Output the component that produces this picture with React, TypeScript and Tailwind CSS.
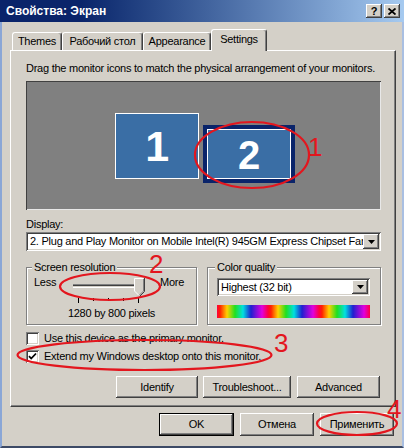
import React from "react";

const raised =
  "bg-[#D4D0C8] shadow-[inset_-1px_-1px_0_#404040,inset_1px_1px_0_#ffffff,inset_-2px_-2px_0_#808080,inset_2px_2px_0_#D4D0C8]";
const sunken =
  "shadow-[inset_1px_1px_0_#808080,inset_-1px_-1px_0_#ffffff,inset_2px_2px_0_#404040,inset_-2px_-2px_0_#D4D0C8]";

function DownArrow() {
  return (
    <svg width="7" height="4" viewBox="0 0 7 4">
      <path d="M0 0h7L3.5 4z" fill="#000" />
    </svg>
  );
}

function Btn({ w, children, def }: { w: string; children: React.ReactNode; def?: boolean }) {
  if (def) {
    return (
      <div className={`${w} h-[23px] border border-black`}>
        <div className={`${raised} w-full h-full flex items-center justify-center`}>{children}</div>
      </div>
    );
  }
  return <div className={`${raised} ${w} h-[23px] flex items-center justify-center`}>{children}</div>;
}

function Tab({ label, w, selected }: { label: string; w: string; selected?: boolean }) {
  if (selected) {
    return (
      <div
        className={`${w} h-[22px] -mb-px relative z-10 bg-[#D4D0C8] border-t border-l border-white border-r border-r-[#404040] rounded-t-[3px] shadow-[inset_-1px_0_0_#808080] flex items-start justify-center pt-[3px]`}
      >
        {label}
      </div>
    );
  }
  return (
    <div
      className={`${w} h-[18px] border-t border-l border-white border-r border-r-[#404040] rounded-t-[3px] shadow-[inset_-1px_0_0_#808080] flex items-start justify-center pt-[2px]`}
    >
      {label}
    </div>
  );
}

export default function App() {
  return (
    <div className="w-[404px] h-[448px] bg-[#D4D0C8] relative overflow-hidden flex flex-col font-['Liberation_Sans',Arial,sans-serif] text-[11px] leading-[13px] tracking-[-0.25px] text-black">
      {/* Title bar */}
      <div className="h-[22px] shrink-0 bg-linear-to-r from-[#0A246A] from-20% to-[#A6CAF0] flex items-center pl-[6px] pr-[4px]">
        <div className="text-white font-bold text-[12px] leading-[14px] tracking-normal flex-1">Свойства: Экран</div>
        <div className="flex gap-[2px]">
          <div className={`${raised} w-[16px] h-[14px] flex items-center justify-center font-bold text-[11px] leading-[11px]`}>
            ?
          </div>
          <div className={`${raised} w-[16px] h-[14px] flex items-center justify-center`}>
            <svg width="8" height="7" viewBox="0 0 8 7">
              <path d="M0.5 0.5L7.5 6.5M7.5 0.5L0.5 6.5" stroke="#000" strokeWidth="1.8" />
            </svg>
          </div>
        </div>
      </div>

      {/* Body */}
      <div className="flex-1 flex flex-col border-l-2 border-l-[#8aa6d6] border-r-2 border-r-[#a9bfe2] border-b-2 border-b-[#3d4a66] pl-[8px] pr-[8px]">
        {/* Tabs */}
        <div className="mt-[7px] h-[21px] flex items-end pl-[2px]">
          <Tab label="Themes" w="w-[50px]" />
          <Tab label="Рабочий стол" w="w-[81px]" />
          <Tab label="Appearance" w="w-[68px]" />
          <Tab label="Settings" w="w-[56px]" selected />
        </div>

        {/* Panel */}
        <div className="w-[386px] border border-t-white border-l-white border-r-[#404040] border-b-[#404040] shadow-[inset_-1px_-1px_0_#808080] pl-[15px] pr-[14px] pt-[11px] pb-[8px] flex flex-col">
          <div className="whitespace-nowrap">Drag the monitor icons to match the physical arrangement of your monitors.</div>

          <div className="mt-[6px] relative w-[355px] h-[129px] bg-[#808080] shadow-[inset_1px_1px_0_#404040,inset_-1px_-1px_0_#e8e8e8]">
            <div className="absolute left-[89px] top-[32px] w-[84px] h-[66px] bg-[#3A6EA5] border border-white flex items-center justify-center text-white font-bold text-[43px] leading-none">
              1
            </div>
            <div className="absolute left-[177px] top-[44px] w-[92px] h-[58px] bg-[#0A246A] p-[4px]">
              <div className="w-full h-full bg-[#3A6EA5] border border-white flex items-center justify-center text-white font-bold text-[40px] leading-none pt-[2px]">
                2
              </div>
            </div>
          </div>

          <div className="mt-[8px]">Display:</div>
          <div className={`mt-[1px] w-[355px] h-[19px] bg-white ${sunken} flex items-center pl-[4px] pr-[2px]`}>
            <div className="flex-1 overflow-hidden whitespace-nowrap">
              2. Plug and Play Monitor on Mobile Intel(R) 945GM Express Chipset Family
            </div>
            <div className={`${raised} w-[16px] h-[15px] shrink-0 flex items-center justify-center`}>
              <DownArrow />
            </div>
          </div>

          <div className="mt-[10px] flex gap-[10px]">
            <fieldset className="w-[171px] border border-[#808080] shadow-[inset_1px_1px_0_#ffffff,1px_1px_0_#ffffff] pb-[4px]">
              <legend className="ml-[5px] px-[2px] bg-[#D4D0C8] relative">Screen resolution</legend>
              <div className="pl-[7px]">
                <div className="mt-[2px] flex items-start">
                  <div className="w-[32px]">Less</div>
                  <svg width="84" height="27" viewBox="0 0 84 27">
                    <rect x="7" y="8" width="70" height="1" fill="#808080" />
                    <rect x="7" y="9" width="70" height="1" fill="#404040" />
                    <rect x="7" y="11" width="71" height="1" fill="#ffffff" />
                    <rect x="77" y="8" width="1" height="4" fill="#ffffff" />
                    <polygon points="68,2 78,2 78,15 73,20 68,15" fill="#D4D0C8" />
                    <polyline points="68.5,15 68.5,2.5 77.5,2.5" fill="none" stroke="#ffffff" strokeWidth="1" />
                    <polyline points="78.5,2 78.5,15.5 73.5,20.5" fill="none" stroke="#404040" strokeWidth="1" />
                    <polyline points="77.5,3 77.5,15 73,19.5" fill="none" stroke="#808080" strokeWidth="1" />
                    <line x1="68.5" y1="15" x2="73" y2="19.5" stroke="#ffffff" strokeWidth="1" />
                    <rect x="12" y="22" width="1" height="5" fill="#000" />
                    <rect x="27" y="22" width="1" height="3" fill="#000" />
                    <rect x="42" y="22" width="1" height="3" fill="#000" />
                    <rect x="57" y="22" width="1" height="3" fill="#000" />
                    <rect x="72" y="22" width="1" height="5" fill="#000" />
                  </svg>
                  <div className="ml-[10px]">More</div>
                </div>
                <div className="mt-[4px] text-center pr-[7px]">1280 by 800 pixels</div>
              </div>
            </fieldset>

            <fieldset className="w-[174px] border border-[#808080] shadow-[inset_1px_1px_0_#ffffff,1px_1px_0_#ffffff] pb-[6px]">
              <legend className="ml-[7px] px-[2px] bg-[#D4D0C8] relative">Color quality</legend>
              <div className="pl-[9px]">
                <div className={`mt-[4px] w-[153px] h-[18px] bg-white ${sunken} flex items-center pl-[4px] pr-[2px]`}>
                  <div className="flex-1 overflow-hidden whitespace-nowrap">Highest (32 bit)</div>
                  <div className={`${raised} w-[16px] h-[14px] shrink-0 flex items-center justify-center`}>
                    <DownArrow />
                  </div>
                </div>
                <div className="mt-[9px] w-[153px] h-[13px] bg-[repeating-linear-gradient(to_right,#ff0040_0px,#ff2000_3px,#ffd000_10px,#20e020_18px,#00e0e0_26px,#2020d0_34px,#e000e0_45px,#ff0040_51px)]" />
              </div>
            </fieldset>
          </div>

          <div className="mt-[7px] flex items-center h-[13px]">
            <div className={`w-[13px] h-[13px] bg-white ${sunken}`} />
            <div className="ml-[5px]">Use this device as the primary monitor.</div>
          </div>
          <div className="mt-[5px] flex items-center h-[13px]">
            <div className={`w-[13px] h-[13px] bg-white ${sunken} flex items-center justify-center`}>
              <svg width="9" height="9" viewBox="0 0 9 9">
                <path d="M1 4.2L3.2 6.5L8 1.5" fill="none" stroke="#000" strokeWidth="1.8" />
              </svg>
            </div>
            <div className="ml-[5px]">Extend my Windows desktop onto this monitor.</div>
          </div>

          <div className="mt-[13px] flex justify-end pr-[1px]">
            <div className={`${raised} w-[82px] h-[22px] flex items-center justify-center`}>Identify</div>
            <div className={`${raised} ml-[5px] w-[88px] h-[22px] flex items-center justify-center`}>Troubleshoot...</div>
            <div className={`${raised} ml-[6px] w-[83px] h-[22px] flex items-center justify-center`}>Advanced</div>
          </div>
        </div>

        {/* Bottom buttons */}
        <div className="mt-[6px] flex justify-end">
          <Btn w="w-[75px]" def>
            OK
          </Btn>
          <div className="ml-[6px]">
            <Btn w="w-[74px]">Отмена</Btn>
          </div>
          <div className="ml-[6px]">
            <Btn w="w-[74px]">Применить</Btn>
          </div>
        </div>
      </div>

      {/* Red annotations */}
      <svg className="absolute left-0 top-0 pointer-events-none" width="404" height="448" viewBox="0 0 404 448">
        <g fill="none" stroke="#e3161e" strokeWidth="2.2">
          <ellipse cx="252" cy="155" rx="57" ry="33" />
          <ellipse cx="110" cy="286.5" rx="50" ry="13.5" />
          <ellipse cx="144.5" cy="355" rx="127" ry="15" />
          <ellipse cx="357" cy="423.5" rx="40" ry="11.5" />
        </g>
        <g fill="#e3161e" fontFamily="'Liberation Sans', Arial, sans-serif" fontSize="26">
          <text x="308" y="156">1</text>
          <text x="149" y="273">2</text>
          <text x="274" y="352">3</text>
          <text x="387" y="418">4</text>
        </g>
      </svg>
    </div>
  );
}
